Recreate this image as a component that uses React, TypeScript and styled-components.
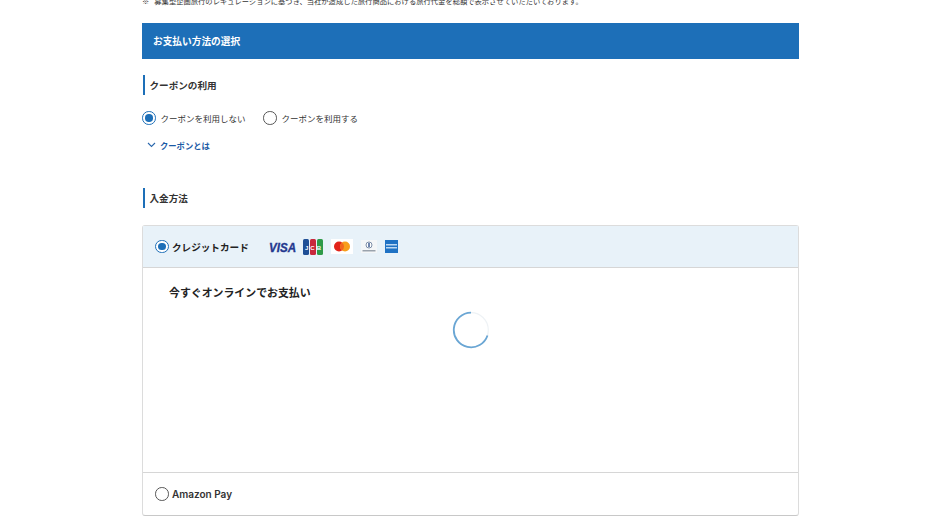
import React from 'react';
import styled, { createGlobalStyle } from 'styled-components';

const GlobalStyle = createGlobalStyle`
  html, body {
    margin: 0;
    padding: 0;
    height: 528px;
    overflow: hidden;
    background: #fff;
    font-family: "Noto Sans CJK JP", "Noto Sans", sans-serif;
    color: #222;
  }
`;

const Page = styled.div`
  width: 657px;
  margin: -5px 0 0 142px;
`;

const Note = styled.p`
  display: flex;
  gap: 5px;
  margin: 0 0 16px;
  height: 12px;
  font-size: 7.3px;
  line-height: 12px;
  color: #333;
  white-space: nowrap;
`;

const Banner = styled.h2`
  margin: 0 0 16px;
  height: 36px;
  padding-left: 11px;
  background: #1d6fb8;
  color: #fff;
  font-size: 9.7px;
  font-weight: 700;
  line-height: 36px;
`;

const SectionTitle = styled.h3`
  margin: 0 0 0 0.5px;
  height: 20px;
  padding-left: 5px;
  border-left: 2.5px solid #1d6fb8;
  font-size: 9.6px;
  font-weight: 700;
  line-height: 20px;
  color: #333;
`;

const RadioRow = styled.div`
  display: flex;
  align-items: center;
  gap: 17.5px;
  margin-top: 16px;
`;

const RadioLabel = styled.label`
  display: flex;
  align-items: center;
  gap: 5px;
  font-size: 8.5px;
  line-height: 14px;
  color: #333;
`;

const RadioDot = styled.span<{ $on?: boolean }>`
  box-sizing: border-box;
  width: 13.5px;
  height: 13.5px;
  border-radius: 50%;
  border: 1.5px solid ${(p) => (p.$on ? '#1d6fb8' : '#555')};
  background: #fff;
  display: flex;
  align-items: center;
  justify-content: center;
  flex: none;
  &::after {
    content: '';
    display: ${(p) => (p.$on ? 'block' : 'none')};
    width: 7.5px;
    height: 7.5px;
    border-radius: 50%;
    background: #1d6fb8;
  }
`;

const InfoLink = styled.a`
  display: flex;
  align-items: center;
  gap: 4.5px;
  margin: 12.5px 0 0 4.5px;
  height: 14px;
  font-size: 8.3px;
  font-weight: 700;
  color: #1b5aa5;
`;

const MethodSection = styled.section`
  margin-top: 36.5px;
`;

const MethodCard = styled.div`
  margin-top: 17px;
  border: 1px solid #dcdcdc;
  border-bottom: 1.5px solid #c8c8c8;
  border-radius: 3px;
  background: #fff;
`;

const CardHeader = styled.div`
  display: flex;
  align-items: center;
  height: 41px;
  padding-left: 12px;
  background: #e8f2f9;
  border-bottom: 1px solid #d6d6d6;
`;

const MethodName = styled.span`
  display: flex;
  align-items: center;
  gap: 3.5px;
  width: 114px;
  font-size: 9.6px;
  font-weight: 700;
  color: #222;
`;

const Logos = styled.div`
  display: flex;
  align-items: center;
  gap: 8px;
`;

const CardBody = styled.div`
  height: 205px;
  padding: 17px 0 0 26px;
  border-bottom: 1px solid #d6d6d6;
  box-sizing: border-box;
`;

const BodyTitle = styled.div`
  font-size: 10.9px;
  font-weight: 700;
  line-height: 15px;
  color: #222;
`;

const SpinnerWrap = styled.div`
  display: flex;
  justify-content: center;
  margin: 11px 0 0 -26px;
`;

const AmazonRow = styled.div`
  display: flex;
  align-items: center;
  height: 42px;
  padding-left: 12px;
`;

const AmazonName = styled(MethodName)`
  width: auto;
  font-family: Inter, "Noto Sans", sans-serif;
  font-size: 10px;
  font-weight: 600;
  color: #333;
`;

const LogoSvg = styled.svg`
  overflow: visible;
  flex: none;
`;

const ChevronIcon = () => (
  <svg width="9" height="6" viewBox="0 0 9 6" fill="none">
    <path d="M1 1l3.5 3.5L8 1" stroke="#2a68ad" strokeWidth="1.1" />
  </svg>
);

const VisaLogo = () => (
  <LogoSvg width="26" height="10" viewBox="0 0 26 10">
    <text x="0" y="9.5" fontFamily="Liberation Sans" fontSize="12.5" fontWeight="700" fontStyle="italic" fill="#24388f" stroke="#24388f" strokeWidth="0.35" textLength="27" lengthAdjust="spacingAndGlyphs">VISA</text>
  </LogoSvg>
);

const JcbLogo = () => (
  <LogoSvg width="20" height="16" viewBox="0 0 20 16">
    <rect x="0" width="6" height="16" rx="1.5" fill="#1f4f96" />
    <rect x="7" width="6" height="16" rx="1.5" fill="#c9283c" />
    <rect x="14" width="6" height="16" rx="1.5" fill="#2f9a48" />
    <text x="10" y="10.5" textAnchor="middle" fontFamily="Liberation Sans" fontSize="6" fontWeight="700" fill="#fff" textLength="16">JCB</text>
  </LogoSvg>
);

const MasterLogo = () => (
  <LogoSvg width="22" height="15" viewBox="0 0 22 15">
    <rect width="22" height="15" fill="#fff" />
    <circle cx="8" cy="7.5" r="5" fill="#e2231a" />
    <circle cx="14" cy="7.5" r="5" fill="#f79e1b" />
    <path d="M11 3.5a5 5 0 0 1 0 8 5 5 0 0 1 0-8z" fill="#f2661e" />
  </LogoSvg>
);

const DinersLogo = () => (
  <LogoSvg width="16" height="13" viewBox="0 0 16 13">
    <rect width="16" height="13" fill="#f4f6f8" />
    <circle cx="8" cy="5" r="3" fill="#fff" stroke="#7d8ea8" strokeWidth="1" />
    <rect x="7.3" y="3" width="1.4" height="4" fill="#33508a" />
    <rect x="1.5" y="10" width="13" height="1.5" fill="#9aa3ad" />
  </LogoSvg>
);

const AmexLogo = () => (
  <LogoSvg width="13" height="13" viewBox="0 0 13 13">
    <rect width="13" height="13" fill="#1f72c4" />
    <rect x="1" y="4" width="11" height="1.5" fill="#bcd8f2" />
    <rect x="1" y="7" width="11" height="1.5" fill="#bcd8f2" />
  </LogoSvg>
);

const Spinner = () => (
  <svg width="38" height="38" viewBox="0 0 38 38" fill="none">
    <circle cx="19" cy="19" r="17.3" stroke="#eef2f5" strokeWidth="1.2" />
    <path d="M19 1.7A17.3 17.3 0 1 0 35.5 24.5" stroke="#6aa6d4" strokeWidth="1.8" />
  </svg>
);

const App = () => (
  <Page>
    <GlobalStyle />
    <Note><span>※</span><span>募集型企画旅行のレギュレーションに基づき、当社が造成した旅行商品における旅行代金を総額で表示させていただいております。</span></Note>
    <Banner>お支払い方法の選択</Banner>
    <SectionTitle>クーポンの利用</SectionTitle>
    <RadioRow>
      <RadioLabel><RadioDot $on />クーポンを利用しない</RadioLabel>
      <RadioLabel><RadioDot />クーポンを利用する</RadioLabel>
    </RadioRow>
    <InfoLink><ChevronIcon />クーポンとは</InfoLink>
    <MethodSection>
      <SectionTitle>入金方法</SectionTitle>
      <MethodCard>
        <CardHeader>
          <MethodName><RadioDot $on />クレジットカード</MethodName>
          <Logos>
            <VisaLogo />
            <JcbLogo />
            <MasterLogo />
            <DinersLogo />
            <AmexLogo />
          </Logos>
        </CardHeader>
        <CardBody>
          <BodyTitle>今すぐオンラインでお支払い</BodyTitle>
          <SpinnerWrap><Spinner /></SpinnerWrap>
        </CardBody>
        <AmazonRow>
          <AmazonName><RadioDot />Amazon Pay</AmazonName>
        </AmazonRow>
      </MethodCard>
    </MethodSection>
  </Page>
);

export default App;
